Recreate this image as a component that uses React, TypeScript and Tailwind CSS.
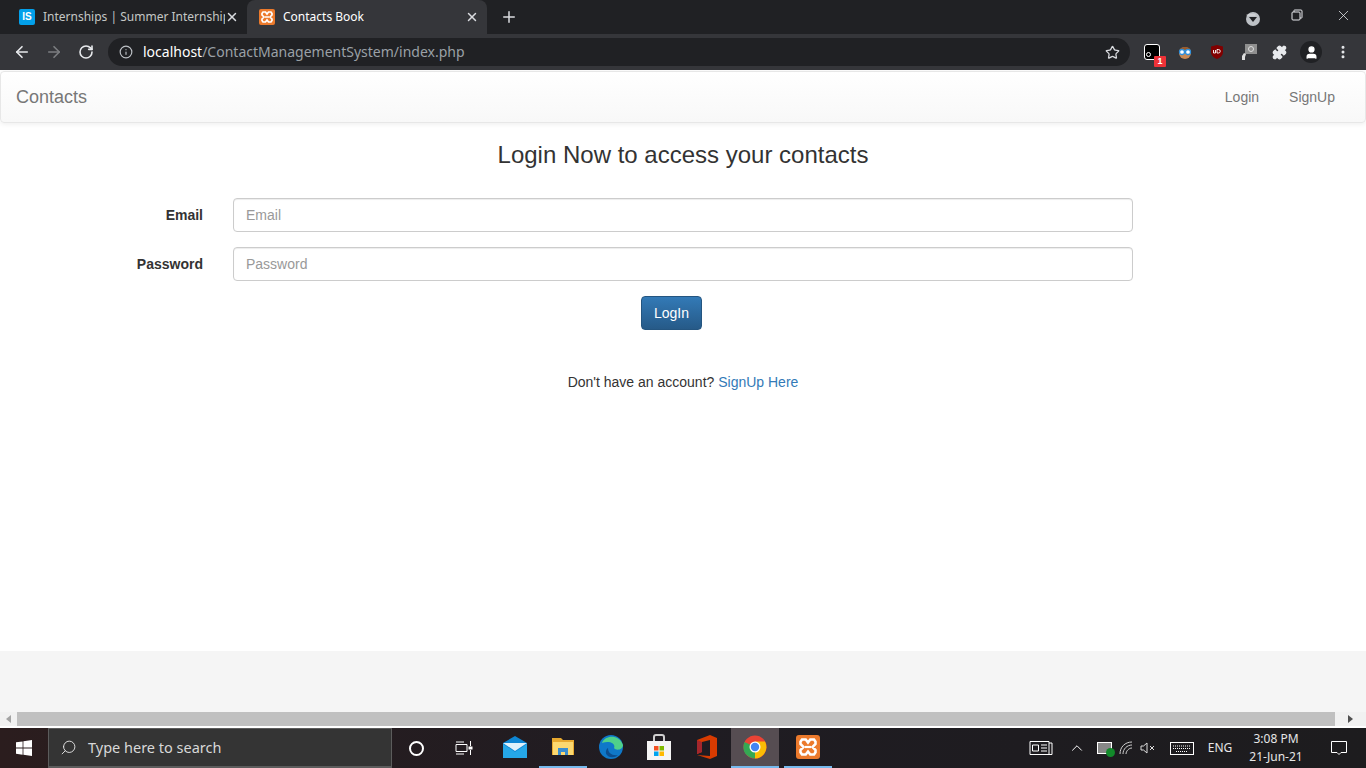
import { ArrowLeft, ArrowRight, RotateCw, Info, Star, X, Plus, Minus, MoreVertical, Puzzle, User, ChevronUp, Search } from "lucide-react"

const font = "font-['Liberation_Sans',Arial,sans-serif]"
const uiFont = "font-['Noto_Sans','Open_Sans',sans-serif]"

function XamppIcon({ size = 16 }: { size?: number }) {
  return (
    <svg width={size} height={size} viewBox="0 0 16 16">
      <rect width="16" height="16" rx="2" fill="#ec7a2c" />
      <path d="M4 3h2.5l1.5 2 1.500-2H12l1 1.500V6l-2 2 2 2v1.500L12 13H9.500L8 11l-1.500 2H4l-1-1.500V10l2-2-2-2V4.500z" fill="none" stroke="#fff" strokeWidth="1.700" />
      <path d="M6 8h4" stroke="#fff" strokeWidth="1.500" />
    </svg>
  )
}

function Tab({ active, title, icon }: { active?: boolean; title: string; icon: React.ReactNode }) {
  return (
    <div className={`flex h-[34px] w-[240px] items-center rounded-t-lg pl-3 pr-2 ${active ? "bg-[#35363a] text-white" : "text-[#c4c7c5]"}`}>
      <div className="mr-2 shrink-0">{icon}</div>
      <span className={`${uiFont} w-[182px] overflow-hidden whitespace-nowrap text-[12px]`}>{title}</span>
      <X size={14} strokeWidth={2.500} className="ml-auto text-[#dadce0]" />
    </div>
  )
}

function Tray({ w, children }: { w: string; children: React.ReactNode }) {
  return <div className={`flex items-center justify-center ${w}`}>{children}</div>
}

function TaskIcon({ active, open, children }: { active?: boolean; open?: boolean; children: React.ReactNode }) {
  return (
    <div className={`flex h-10 w-[48px] items-center justify-center border-b-[2px] ${active ? "bg-[#564d52]" : ""} ${open ? "border-[#76b9ed]" : "border-transparent"}`}>
      {children}
    </div>
  )
}

export default function App() {
  return (
    <div className={`${font} flex h-[768px] w-[1366px] flex-col overflow-hidden bg-white`}>
      {/* tab strip */}
      <div className="flex h-[34px] shrink-0 items-end bg-[#202124] pl-[7px]">
        <Tab
          title="Internships | Summer Internship 2"
          icon={<div className="flex h-4 w-4 items-center justify-center rounded-[2px] bg-[#03a0ea] text-[10px] font-bold leading-none text-white">IS</div>}
        />
        <Tab active title="Contacts Book" icon={<XamppIcon />} />
        <Plus size={18} strokeWidth={2} className="mb-[8px] ml-[13px] text-[#dadce0]" />
        <div className="ml-auto mb-[8px] mr-[106px] flex h-[14px] w-[14px] items-center justify-center rounded-full bg-[#bdc1c6]">
          <div className="h-0 w-0 border-x-[4px] border-t-[5px] border-x-transparent border-t-[#202124]" />
        </div>
        <div className="absolute right-0 top-0 flex h-[30px] items-center text-[#e8eaed]">
          <div className="flex w-[46px] justify-center"><Minus size={14} strokeWidth={1.300} /></div>
          <div className="flex w-[46px] justify-center">
            <svg width="12" height="12" viewBox="0 0 12 12" fill="none" stroke="currentColor"><rect x="1" y="3" width="8" height="8" rx="1" /><path d="M3 3V1.500A.5.5 0 0 1 3.500 1H10a1 1 0 0 1 1 1v6.500a.5.5 0 0 1-.5.500H9" /></svg>
          </div>
          <div className="flex w-[46px] justify-center"><X size={17} strokeWidth={1.100} /></div>
        </div>
      </div>

      {/* toolbar */}
      <div className="flex h-[36px] shrink-0 items-center bg-[#35363a]">
        <div className="flex w-[108px] items-center pl-[13px]">
          <ArrowLeft size={18} strokeWidth={2.200} className="text-[#e8eaed]" />
          <ArrowRight size={18} strokeWidth={2.200} className="ml-[14px] text-[#7c7e81]" />
          <RotateCw size={16} strokeWidth={2.400} className="ml-[15px] text-[#e8eaed]" />
        </div>
        <div className="flex h-[28px] w-[1022px] items-center rounded-full bg-[#202124] pl-[11px] pr-[10px]">
          <Info size={14} className="text-[#bdc1c6]" />
          <span className={`${uiFont} ml-[10px] text-[14px] leading-none text-[#9aa0a6]`}>
            <span className="text-white">localhost</span>/ContactManagementSystem/index.php
          </span>
          <Star size={15} className="ml-auto text-[#dadce0]" />
        </div>
        <div className="flex flex-1 items-center text-[#e8eaed]">
          <div className="relative ml-[14px] flex h-4 w-4 items-end justify-start rounded-[3px] border border-white bg-black pb-[2px] pl-[1px]">
            <div className="h-[5px] w-[5px] rounded-full border border-white" />
            <div className="absolute -bottom-[8px] left-[9px] flex h-[11px] w-[12px] items-center justify-center rounded-[1px] bg-[#ee3238] text-[9px] font-bold leading-none text-white">1</div>
          </div>
          <svg className="ml-[17px]" width="16" height="16" viewBox="0 0 16 16">
            <circle cx="8" cy="9" r="6" fill="#c98a55" />
            <path d="M2.500 6C3 2 13 2 13.500 6z" fill="#9a5a2a" />
            <circle cx="5" cy="8" r="2.500" fill="#fff" stroke="#2d8fdc" strokeWidth="1.300" />
            <circle cx="11" cy="8" r="2.500" fill="#fff" stroke="#2d8fdc" strokeWidth="1.300" />
          </svg>
          <svg className="ml-[16px]" width="16" height="16" viewBox="0 0 16 16">
            <path d="M8 1l6 1.500V8c0 3.500-3 6-6 7-3-1-6-3.500-6-7V2.500z" fill="#800000" />
            <path d="M4.500 6v3h2V6M8 5.500V9h1.500a1.700 1.700 0 0 0 0-3.500z" fill="none" stroke="#fff" strokeWidth="0.900" />
          </svg>
          <svg className="ml-[16px]" width="17" height="18" viewBox="0 0 17 18">
            <rect x="4" y="1" width="12" height="10" fill="#8f8f8f" />
            <circle cx="10" cy="6" r="2.500" fill="none" stroke="#ddd" />
            <path d="M1 17v-4l2-3 2 1-1 3v3z" fill="#ddd" />
          </svg>
          <Puzzle size={15} fill="#e8eaed" className="ml-[14px]" />
          <div className="ml-[13px] flex h-[22px] w-[22px] items-center justify-center rounded-full bg-[#202124]">
            <User size={15} fill="#fff" className="text-white" />
          </div>
          <MoreVertical size={16} strokeWidth={2.500} className="ml-[13px]" />
        </div>
      </div>

      {/* page */}
      <div className="h-[642px] shrink-0 overflow-hidden bg-[#f5f5f5]">
        <div className="h-[581px] bg-white pt-px">
          <nav className="flex h-[52px] items-center rounded border border-[#e7e7e7] bg-gradient-to-b from-white to-[#f8f8f8] pl-[15px] pr-[15px] shadow-[0_1px_5px_rgba(0,0,0,0.075)]">
            <span className="text-[18px] text-[#777]">Contacts</span>
            <div className="ml-auto flex text-[14px] text-[#777]">
              <span className="px-[15px]">Login</span>
              <span className="px-[15px]">SignUp</span>
            </div>
          </nav>
          <h3 className="mt-[19px] text-center text-[24px] leading-[26px] text-[#333]">Login Now to access your contacts</h3>
          <form className="mt-[30px] ml-[98px] flex w-[1035px] flex-col gap-[15px] text-[14px]">
            <div className="flex items-center">
              <label className="w-[105px] text-right font-bold text-[#333]">Email</label>
              <input placeholder="Email" className="ml-[30px] h-[34px] w-[900px] rounded border border-[#ccc] px-3 shadow-[inset_0_1px_1px_rgba(0,0,0,0.075)] placeholder:text-[#999]" />
            </div>
            <div className="flex items-center">
              <label className="w-[105px] text-right font-bold text-[#333]">Password</label>
              <input placeholder="Password" className="ml-[30px] h-[34px] w-[900px] rounded border border-[#ccc] px-3 shadow-[inset_0_1px_1px_rgba(0,0,0,0.075)] placeholder:text-[#999]" />
            </div>
            <button type="button" className="ml-[543px] h-[34px] w-[61px] rounded border border-[#245580] bg-gradient-to-b from-[#337ab7] to-[#265a88] text-white">LogIn</button>
          </form>
          <p className="mt-[42px] text-center text-[14px] leading-5 text-[#333]">
            Don't have an account? <span className="text-[#337ab7]">SignUp Here</span>
          </p>
        </div>
      </div>

      {/* horizontal scrollbar */}
      <div className="flex h-[14px] shrink-0 items-center bg-[#f1f1f1]">
        <div className="flex w-[17px] justify-center">
          <div className="h-0 w-0 border-y-[4px] border-r-[5px] border-y-transparent border-r-[#a3a3a3]" />
        </div>
        <div className="h-full w-[1318px] bg-[#c0c0c0]" />
        <div className="flex w-[31px] justify-center">
          <div className="h-0 w-0 border-y-[4px] border-l-[5px] border-y-transparent border-l-[#505050]" />
        </div>
      </div>
      <div className="h-[2px] shrink-0 bg-white" />

      {/* taskbar */}
      <div className="flex h-10 shrink-0 items-center bg-gradient-to-r from-[#2b1d1e] via-[#1f1c22] to-[#1d1c1e] text-white">
        <div className="flex w-[48px] justify-center">
          <svg width="16" height="16" viewBox="0 0 16 16" fill="#fff"><path d="M0 2.300l6.600-.9v6.200H0zM7.400 1.300L16 0v7.600H7.400zM0 8.400h6.600v6.300L0 13.700zM7.400 8.400H16V16l-8.600-1.200z" /></svg>
        </div>
        <div className="flex h-10 w-[344px] items-center border-x border-t border-b-2 border-[#5c5c5c] bg-[#343434] pl-[11px]">
          <Search size={17} strokeWidth={1.300} className="-scale-x-100 text-[#e6e6e6]" />
          <span className={`${uiFont} ml-[11px] text-[14.500px] text-[#d8d8d8]`}>Type here to search</span>
        </div>
        <div className="flex w-[48px] justify-center">
          <div className="h-[15px] w-[15px] rounded-full border-[2px] border-white" />
        </div>
        <div className="flex w-[48px] justify-center">
          <svg width="18" height="16" viewBox="0 0 18 16" fill="none" stroke="#fff" strokeWidth="1"><path d="M1 4.500h11v7H1zM1 2h8M1 14h8" /><path d="M15.500 1v5M15.500 10v5" /><rect x="14" y="7" width="3" height="2" fill="#fff" /></svg>
        </div>
        <div className="ml-[3px] flex">
          <TaskIcon>
            <svg width="24" height="24" viewBox="0 0 24 24">
              <path d="M0 8L12 1l12 7v15H0z" fill="#0e86d4" />
              <path d="M0 8h24l-12 8z" fill="#dff1fb" />
              <path d="M0 9l12 8 12-8v14H0z" fill="#25a7e8" />
            </svg>
          </TaskIcon>
          <TaskIcon open>
            <svg width="22" height="20" viewBox="0 0 22 20">
              <path d="M0 1h9l2 2h11v15H0z" fill="#e8a92f" />
              <path d="M1 5h20v13H1z" fill="#fcd870" />
              <path d="M6 11h10v7h-3v-3H9v3H6z" fill="#3a8ed0" />
            </svg>
          </TaskIcon>
          <TaskIcon>
            <svg width="24" height="24" viewBox="0 0 24 24">
              <circle cx="12" cy="12" r="12" fill="#0f78c9" />
              <path d="M3 8C6 0 20-1 24 10c0 5-7 6-9 3 2-4-4-8-12-5z" fill="#4fd18b" />
              <path d="M9 13c0 5 4 8 10 7-3 3-9 3-11 0-2-2-1-6 1-7z" fill="#0c4d8f" />
            </svg>
          </TaskIcon>
          <TaskIcon>
            <svg width="24" height="26" viewBox="0 0 24 26">
              <path d="M7 7V3a2 2 0 0 1 2-2h6a2 2 0 0 1 2 2v4" fill="none" stroke="#cfcfcf" strokeWidth="2" />
              <rect y="7" width="24" height="19" fill="#f5f5f5" />
              <rect x="7" y="12" width="4.500" height="4.500" fill="#f25022" />
              <rect x="12.500" y="12" width="4.500" height="4.500" fill="#7fba00" />
              <rect x="7" y="17.500" width="4.500" height="4.500" fill="#00a4ef" />
              <rect x="12.500" y="17.500" width="4.500" height="4.500" fill="#ffb900" />
            </svg>
          </TaskIcon>
          <TaskIcon>
            <svg width="20" height="24" viewBox="0 0 20 24">
              <path d="M0 5l13-5 7 3v18l-7 3-13-4 13 1V5L5 7v10l-5 2z" fill="#d83b01" />
              <path d="M0 5l5 2v10l-5 2z" fill="#a4262c" />
            </svg>
          </TaskIcon>
          <TaskIcon active open>
            <svg width="24" height="24" viewBox="0 0 24 24">
              <circle cx="12" cy="12" r="11.500" fill="#ea4335" />
              <path d="M12 12L1.500 7A11.500 11.500 0 0 0 12 23.500z" fill="#34a853" />
              <path d="M12 6.500h10A11.500 11.500 0 0 1 12 23.500z" fill="#fbbc05" />
              <circle cx="12" cy="12" r="5.500" fill="#fff" />
              <circle cx="12" cy="12" r="4.200" fill="#4285f4" />
            </svg>
          </TaskIcon>
          <div className="ml-[5px] mr-[-5px]">
            <TaskIcon open><XamppIcon size={24} /></TaskIcon>
          </div>
        </div>

        <div className="ml-auto flex h-10 items-center">
          <Tray w="w-[24px]">
            <svg width="24" height="16" viewBox="0 0 24 16" fill="none" stroke="#fff"><path d="M1 1.500h19v13H1zM20 3h3v11.500h-3" /><path d="M3.500 5h6v6h-6zM12 5h6M12 8h6M12 11h6" /></svg>
          </Tray>
          <Tray w="w-[24px] ml-[12px]"><ChevronUp size={18} strokeWidth={1.300} /></Tray>
          <Tray w="w-[22px] ml-[4px]">
            <div className="relative h-3 w-[15px] border border-white bg-[#888]">
              <div className="absolute -bottom-[4px] -right-[4px] h-[9px] w-[9px] rounded-full bg-[#12892a]" />
            </div>
          </Tray>
          <Tray w="w-[22px]">
            <svg width="14" height="14" viewBox="0 0 14 14" fill="none" stroke="#cfcfcf"><path d="M1 13C1 6 6 1 13 1M4 13c0-5 4-9 9-9M7 13c0-3 3-6 6-6" /></svg>
          </Tray>
          <Tray w="w-[22px]">
            <svg width="16" height="12" viewBox="0 0 16 12" fill="none" stroke="#ddd"><path d="M1 4h2.500L7 1v10L3.500 8H1zM10 4l4 4M14 4l-4 4" /></svg>
          </Tray>
          <Tray w="w-[34px] ml-[6px]">
            <svg width="24" height="13" viewBox="0 0 24 13" fill="none" stroke="#fff"><rect x=".5" y=".5" width="23" height="12" /><path d="M3 4h18M3 6.500h18M6 9.500h12" strokeDasharray="1 1" /></svg>
          </Tray>
          <span className={`${uiFont} ml-[6px] w-[30px] text-center text-[12px] text-[#e6e6e6]`}>ENG</span>
          <div className={`${uiFont} ml-[8px] w-[66px] text-center text-[12px] leading-[18px] text-[#e6e6e6]`}>
            <div>3:08 PM</div>
            <div>21-Jun-21</div>
          </div>
          <Tray w="w-[54px] ml-[3px]">
            <svg width="16" height="16" viewBox="0 0 16 16" fill="none" stroke="#fff"><path d="M.5 1.500h15v11H10l-2 2-2-2H.5z" /></svg>
          </Tray>
        </div>
      </div>
    </div>
  )
}
